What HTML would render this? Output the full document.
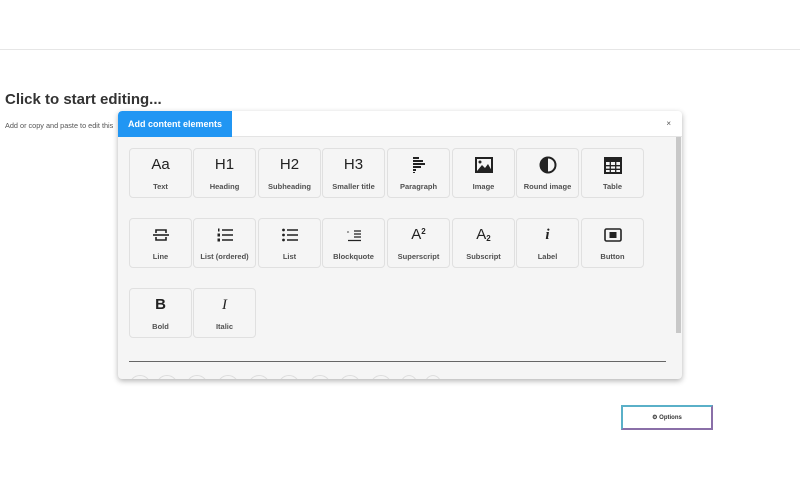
<!DOCTYPE html>
<html><head><style>
*{box-sizing:border-box;margin:0;padding:0}
body{width:800px;height:500px;background:#fff;position:relative;overflow:hidden;font-family:"Liberation Sans",sans-serif;color:#222}
.top{position:absolute;left:0;top:49px;width:800px;height:1px;background:#e6e6e6}
h1{position:absolute;left:5px;top:91px;font-size:15px;font-weight:bold;color:#333}
.sub{position:absolute;left:5px;top:121px;font-size:7.3px;color:#555}
.panel{position:absolute;left:118px;top:111px;width:564px;height:268px;background:#f5f5f5;border-radius:4px;box-shadow:0 2px 6px rgba(0,0,0,.3);overflow:hidden}
.head{height:26px;background:#fff;border-bottom:1px solid #e4e4e4;position:relative}
.tab{position:absolute;left:0;top:0;width:114px;height:26px;background:#2196f3;color:#fff;font-size:9px;font-weight:bold;line-height:26px;padding-left:10px;border-top-left-radius:4px}
.x{position:absolute;right:11px;top:8px;font-size:8px;color:#555}
.tile{position:absolute;width:63px;height:50px;border:1px solid #e0e0e0;border-radius:4px;background:#f5f5f5;text-align:center}
.ic{position:absolute;left:0;right:0;top:7px;height:18px;font-size:15px;line-height:18px;color:#222;display:flex;justify-content:center;align-items:center}
.lb{position:absolute;left:0;right:0;top:33px;font-size:7.5px;color:#333;font-weight:bold;opacity:.85}
.sb{position:absolute;left:558px;top:26px;width:5px;height:196px;background:#c8c8c8}
.line{position:absolute;left:11px;top:250px;width:537px;height:1px;background:#666}
.c{position:absolute;top:264px;width:22px;height:22px;border:1px solid #ddd;border-radius:50%}
.opt{position:absolute;left:621px;top:405px;width:92px;height:25px;border:2px solid;border-color:#5ab0c8 #8a6fa8 #8a6fa8 #5ab0c8;font-size:6px;font-weight:bold;text-align:center;line-height:23px;color:#333}
</style></head><body>
<div class="top"></div>
<h1>Click to start editing...</h1>
<div class="sub">Add or copy and paste to edit this</div>
<div class="panel">
<div class="head"><div class="tab">Add content elements</div><div class="x">×</div></div>
<div class="sb"></div>
<div class="tile" style="left:11px;top:37px"><div class="ic">Aa</div><div class="lb">Text</div></div>
<div class="tile" style="left:75px;top:37px"><div class="ic">H1</div><div class="lb">Heading</div></div>
<div class="tile" style="left:140px;top:37px"><div class="ic">H2</div><div class="lb">Subheading</div></div>
<div class="tile" style="left:204px;top:37px"><div class="ic">H3</div><div class="lb">Smaller title</div></div>
<div class="tile" style="left:269px;top:37px"><div class="ic"><svg width="16" height="18" viewBox="0 0 16 18"><g fill="#222"><rect x="2" y="1" width="6" height="2"/><rect x="2" y="4" width="10" height="2"/><rect x="2" y="7" width="12" height="2"/><rect x="2" y="10" width="8" height="2"/><rect x="2" y="13" width="3" height="2"/><rect x="2" y="16" width="2" height="1"/></g></svg></div><div class="lb">Paragraph</div></div>
<div class="tile" style="left:334px;top:37px"><div class="ic"><svg width="18" height="16" viewBox="0 0 18 16"><rect x="1" y="1" width="16" height="14" fill="none" stroke="#222" stroke-width="2"/><circle cx="5" cy="5" r="1.5" fill="#222"/><path d="M2 14L7 8l3 3 3-4 4 7z" fill="#222"/></svg></div><div class="lb">Image</div></div>
<div class="tile" style="left:398px;top:37px"><div class="ic"><svg width="18" height="18" viewBox="0 0 18 18"><circle cx="9" cy="9" r="7.5" fill="none" stroke="#222" stroke-width="2"/><path d="M9 1.5a7.5 7.5 0 0 0 0 15z" fill="#222"/></svg></div><div class="lb">Round image</div></div>
<div class="tile" style="left:463px;top:37px"><div class="ic"><svg width="18" height="17" viewBox="0 0 18 17"><rect x="1" y="1" width="16" height="15" fill="none" stroke="#222" stroke-width="2"/><rect x="1" y="1" width="16" height="4" fill="#222"/><path d="M6.3 5v11M11.7 5v11M1 8.7h16M1 12.3h16" stroke="#222" stroke-width="1.3"/></svg></div><div class="lb">Table</div></div>
<div class="tile" style="left:11px;top:107px"><div class="ic"><svg width="18" height="16" viewBox="0 0 18 16"><path d="M4 6V3h10v3M4 10v3h10v-3" fill="none" stroke="#222" stroke-width="1.6"/><path d="M1 8h16" stroke="#222" stroke-width="1.6"/></svg></div><div class="lb">Line</div></div>
<div class="tile" style="left:75px;top:107px"><div class="ic"><svg width="18" height="16" viewBox="0 0 18 16"><path d="M6 3h11M6 8h11M6 13h11" stroke="#222" stroke-width="1.4"/><g fill="#222"><rect x="2" y="1.5" width="1.5" height="3"/><rect x="1.5" y="6.5" width="2.5" height="3"/><rect x="1.5" y="11.5" width="2.5" height="3"/></g></svg></div><div class="lb">List (ordered)</div></div>
<div class="tile" style="left:140px;top:107px"><div class="ic"><svg width="18" height="16" viewBox="0 0 18 16"><path d="M6 3h11M6 8h11M6 13h11" stroke="#222" stroke-width="1.4"/><g fill="#222"><circle cx="2.5" cy="3" r="1.4"/><circle cx="2.5" cy="8" r="1.4"/><circle cx="2.5" cy="13" r="1.4"/></g></svg></div><div class="lb">List</div></div>
<div class="tile" style="left:204px;top:107px"><div class="ic"><svg width="16" height="14" viewBox="0 0 16 14"><path d="M8 3h7M8 6h7M8 9h7M2 12.5h13" stroke="#222" stroke-width="1.2"/><text x="1" y="8" font-size="7" font-family="Liberation Sans" fill="#222">“</text></svg></div><div class="lb">Blockquote</div></div>
<div class="tile" style="left:269px;top:107px"><div class="ic">A<sup style="font-size:8px;font-weight:bold;position:relative;top:-3px">2</sup></div><div class="lb">Superscript</div></div>
<div class="tile" style="left:334px;top:107px"><div class="ic">A<sub style="font-size:8px;font-weight:bold;position:relative;top:4px">2</sub></div><div class="lb">Subscript</div></div>
<div class="tile" style="left:398px;top:107px"><div class="ic" style="font-family:'Liberation Serif',serif;font-style:italic;font-weight:bold">i</div><div class="lb">Label</div></div>
<div class="tile" style="left:463px;top:107px"><div class="ic"><svg width="18" height="14" viewBox="0 0 18 14"><rect x="1" y="1" width="16" height="12" rx="1.5" fill="none" stroke="#222" stroke-width="1.6"/><rect x="5.5" y="4" width="7" height="6" fill="#222"/></svg></div><div class="lb">Button</div></div>
<div class="tile" style="left:11px;top:177px"><div class="ic" style="font-weight:bold">B</div><div class="lb">Bold</div></div>
<div class="tile" style="left:75px;top:177px"><div class="ic" style="font-family:'Liberation Serif',serif;font-style:italic">I</div><div class="lb">Italic</div></div>
<div class="line"></div>
<div class="c" style="left:11px"></div><div class="c" style="left:38px"></div><div class="c" style="left:68px"></div><div class="c" style="left:99px"></div><div class="c" style="left:130px"></div><div class="c" style="left:160px"></div><div class="c" style="left:191px"></div><div class="c" style="left:221px"></div><div class="c" style="left:252px"></div><div class="c" style="left:282px;width:18px"></div><div class="c" style="left:306px;width:18px"></div>
</div>
<div class="opt">⚙ Options</div>
</body></html>
